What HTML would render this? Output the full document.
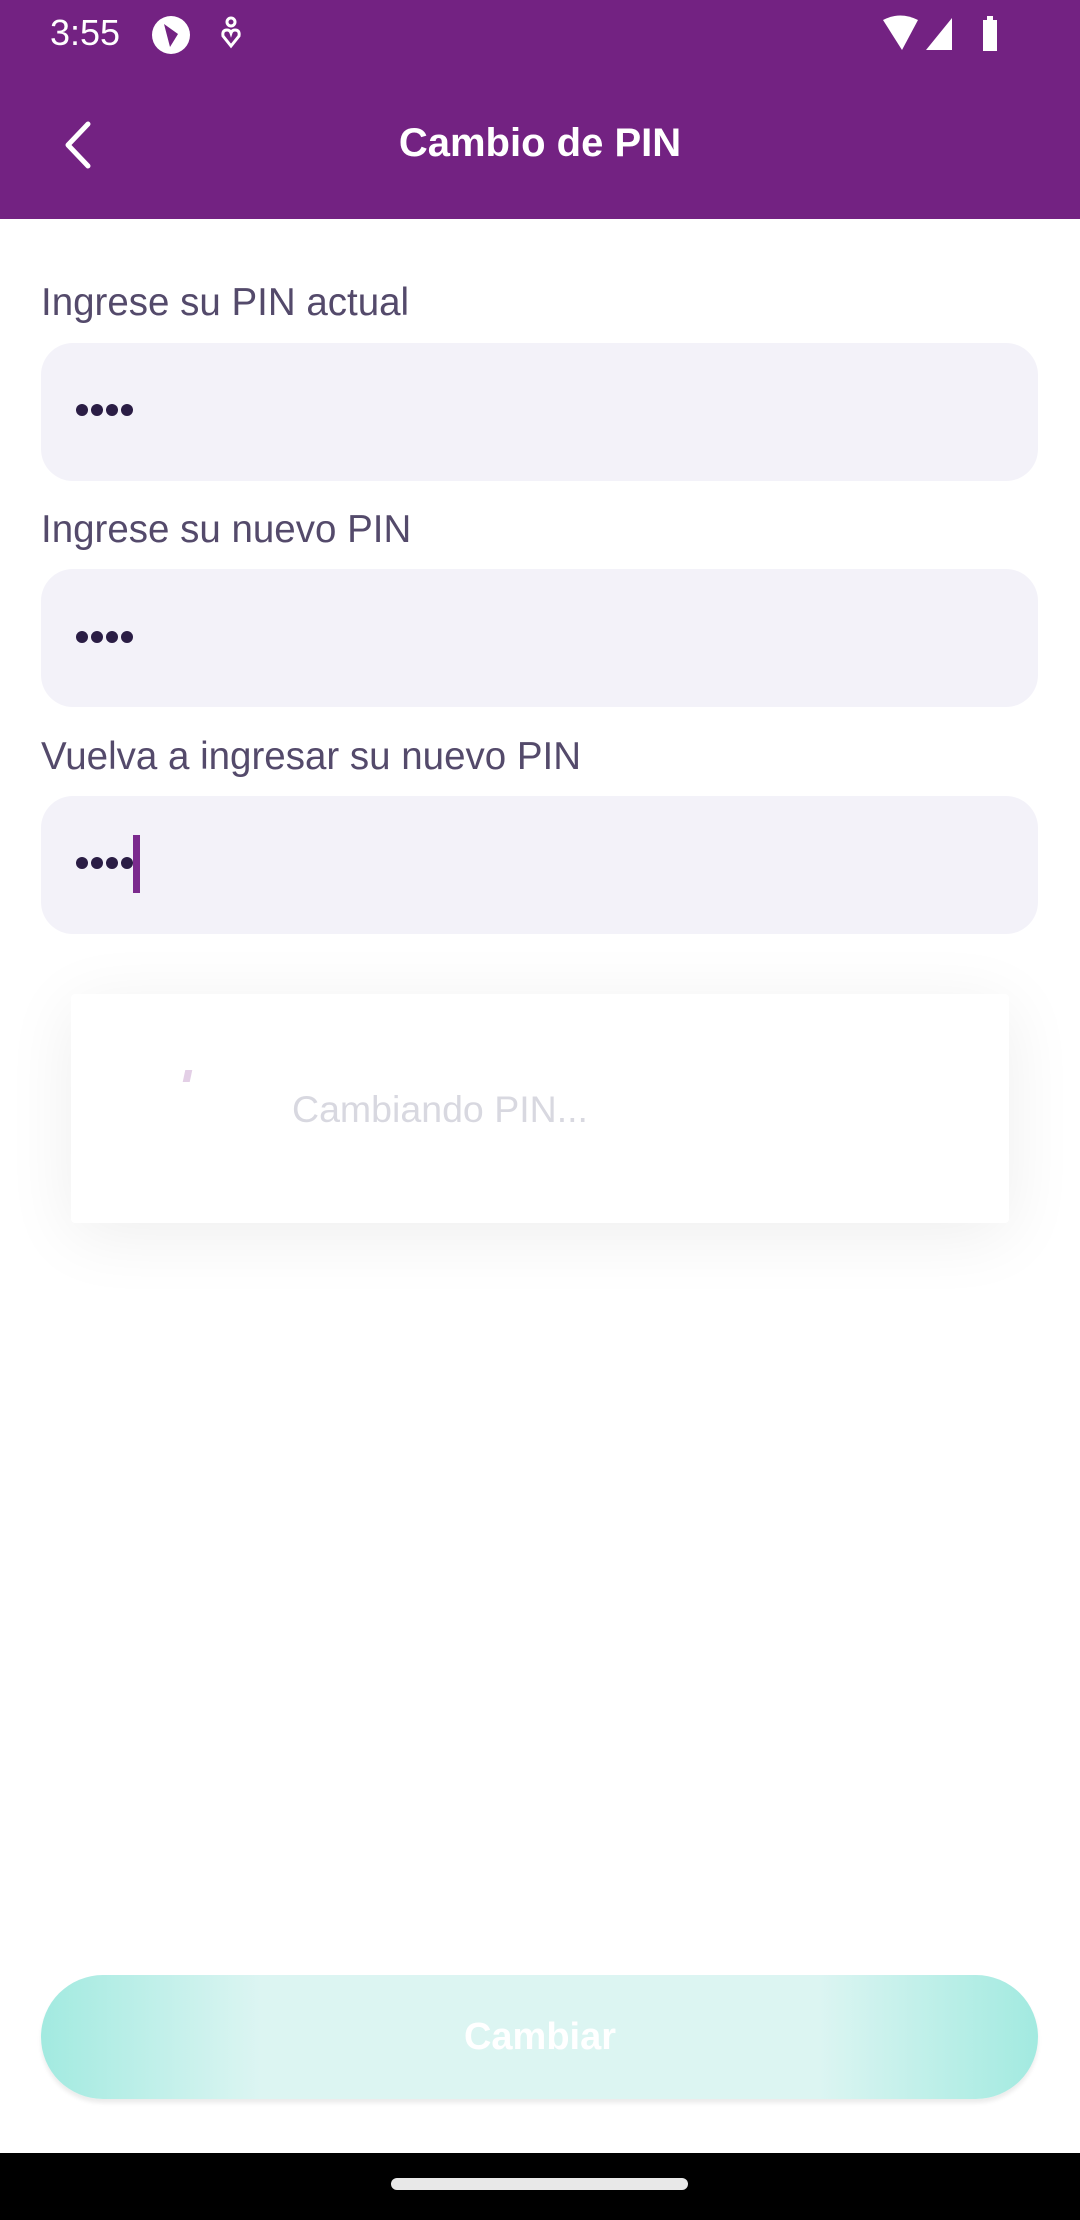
<!DOCTYPE html>
<html><head><meta charset="utf-8"><style>
*{margin:0;padding:0;box-sizing:border-box}
body{width:1080px;height:2220px;position:relative;background:#fff;font-family:"Liberation Sans",sans-serif;overflow:hidden}
.bar{position:absolute;left:0;top:0;width:1080px;height:219px;background:#732282}
.time{position:absolute;left:50px;top:12px;color:#fff;font-size:36px}
.title{position:absolute;left:0;width:1080px;top:121px;text-align:center;color:#fff;font-size:40px;font-weight:bold}
.label{position:absolute;left:41px;color:#544a6b;font-size:38.5px}
.field{position:absolute;left:41px;width:997px;height:138px;background:#f3f2f9;border-radius:32px}
.dots{position:absolute;left:76px;display:flex;gap:3px}
.dots i{width:12px;height:12px;border-radius:50%;background:#2a1d45;display:block}
</style></head><body>
<div class="bar">
<div class="time">3:55</div>
<svg style="position:absolute;left:150px;top:14px" width="44" height="42" viewBox="0 0 44 42"><circle cx="21" cy="21" r="19" fill="#fff"/><path d="M14 10 L28 20 L20 33 Z" fill="#732282"/></svg>
<svg style="position:absolute;left:220px;top:16px" width="22" height="34" viewBox="0 0 22 34"><circle cx="11" cy="6" r="4" fill="none" stroke="#fff" stroke-width="3"/><path d="M11 30 L3 20 Q2 14 7 14 Q10 14 11 17 Q12 14 15 14 Q20 14 19 20 Z" fill="none" stroke="#fff" stroke-width="3"/></svg>
<svg style="position:absolute;left:880px;top:14px" width="130" height="38" viewBox="0 0 130 38"><path d="M3 6 Q20 -3 38 6 L22 36 Z" fill="#fff"/><path d="M46 36 L72 4 L72 36 Z" fill="#fff"/><rect x="103" y="6" width="14" height="31" fill="#fff"/><rect x="107" y="2" width="6" height="5" fill="#fff"/></svg>
<svg style="position:absolute;left:60px;top:120px" width="36" height="50" viewBox="0 0 36 50"><path d="M28 4 L8 25 L28 46" fill="none" stroke="#fff" stroke-width="5" stroke-linecap="round" stroke-linejoin="round"/></svg>
<div class="title">Cambio de PIN</div>
</div>

<div class="label" style="top:281px">Ingrese su PIN actual</div>
<div class="field" style="top:343px"></div>
<div class="dots" style="top:404px"><i></i><i></i><i></i><i></i></div>

<div class="label" style="top:508px">Ingrese su nuevo PIN</div>
<div class="field" style="top:569px"></div>
<div class="dots" style="top:631px"><i></i><i></i><i></i><i></i></div>

<div class="label" style="top:735px">Vuelva a ingresar su nuevo PIN</div>
<div class="field" style="top:796px"></div>
<div class="dots" style="top:857px"><i></i><i></i><i></i><i></i></div>
<div style="position:absolute;left:133px;top:835px;width:7px;height:58px;background:#7b2a8e"></div>

<div style="position:absolute;left:71px;top:994px;width:938px;height:229px;background:#fff;box-shadow:0 12px 70px rgba(0,0,0,0.07);border-radius:4px"></div>
<div style="position:absolute;left:184px;top:1070px;width:7px;height:12px;background:#e3cfe6;transform:skewX(-12deg)"></div>
<div style="position:absolute;left:292px;top:1088px;color:#d8d8e0;font-size:37.5px">Cambiando PIN...</div>

<div style="position:absolute;left:41px;top:1975px;width:997px;height:124px;border-radius:62px/62px;background:linear-gradient(90deg,#a2eae0 0%,#dcf5f2 22%,#dcf5f2 78%,#a2eae0 100%);box-shadow:0 4px 4px rgba(0,0,0,0.08)"></div>
<div style="position:absolute;left:0;width:1080px;top:2016px;text-align:center;color:#fff;font-size:38px;font-weight:bold">Cambiar</div>

<div style="position:absolute;left:0;top:2153px;width:1080px;height:67px;background:#000"></div>
<div style="position:absolute;left:391px;top:2178px;width:297px;height:12px;border-radius:6px;background:#e8e8e8"></div>
</body></html>
